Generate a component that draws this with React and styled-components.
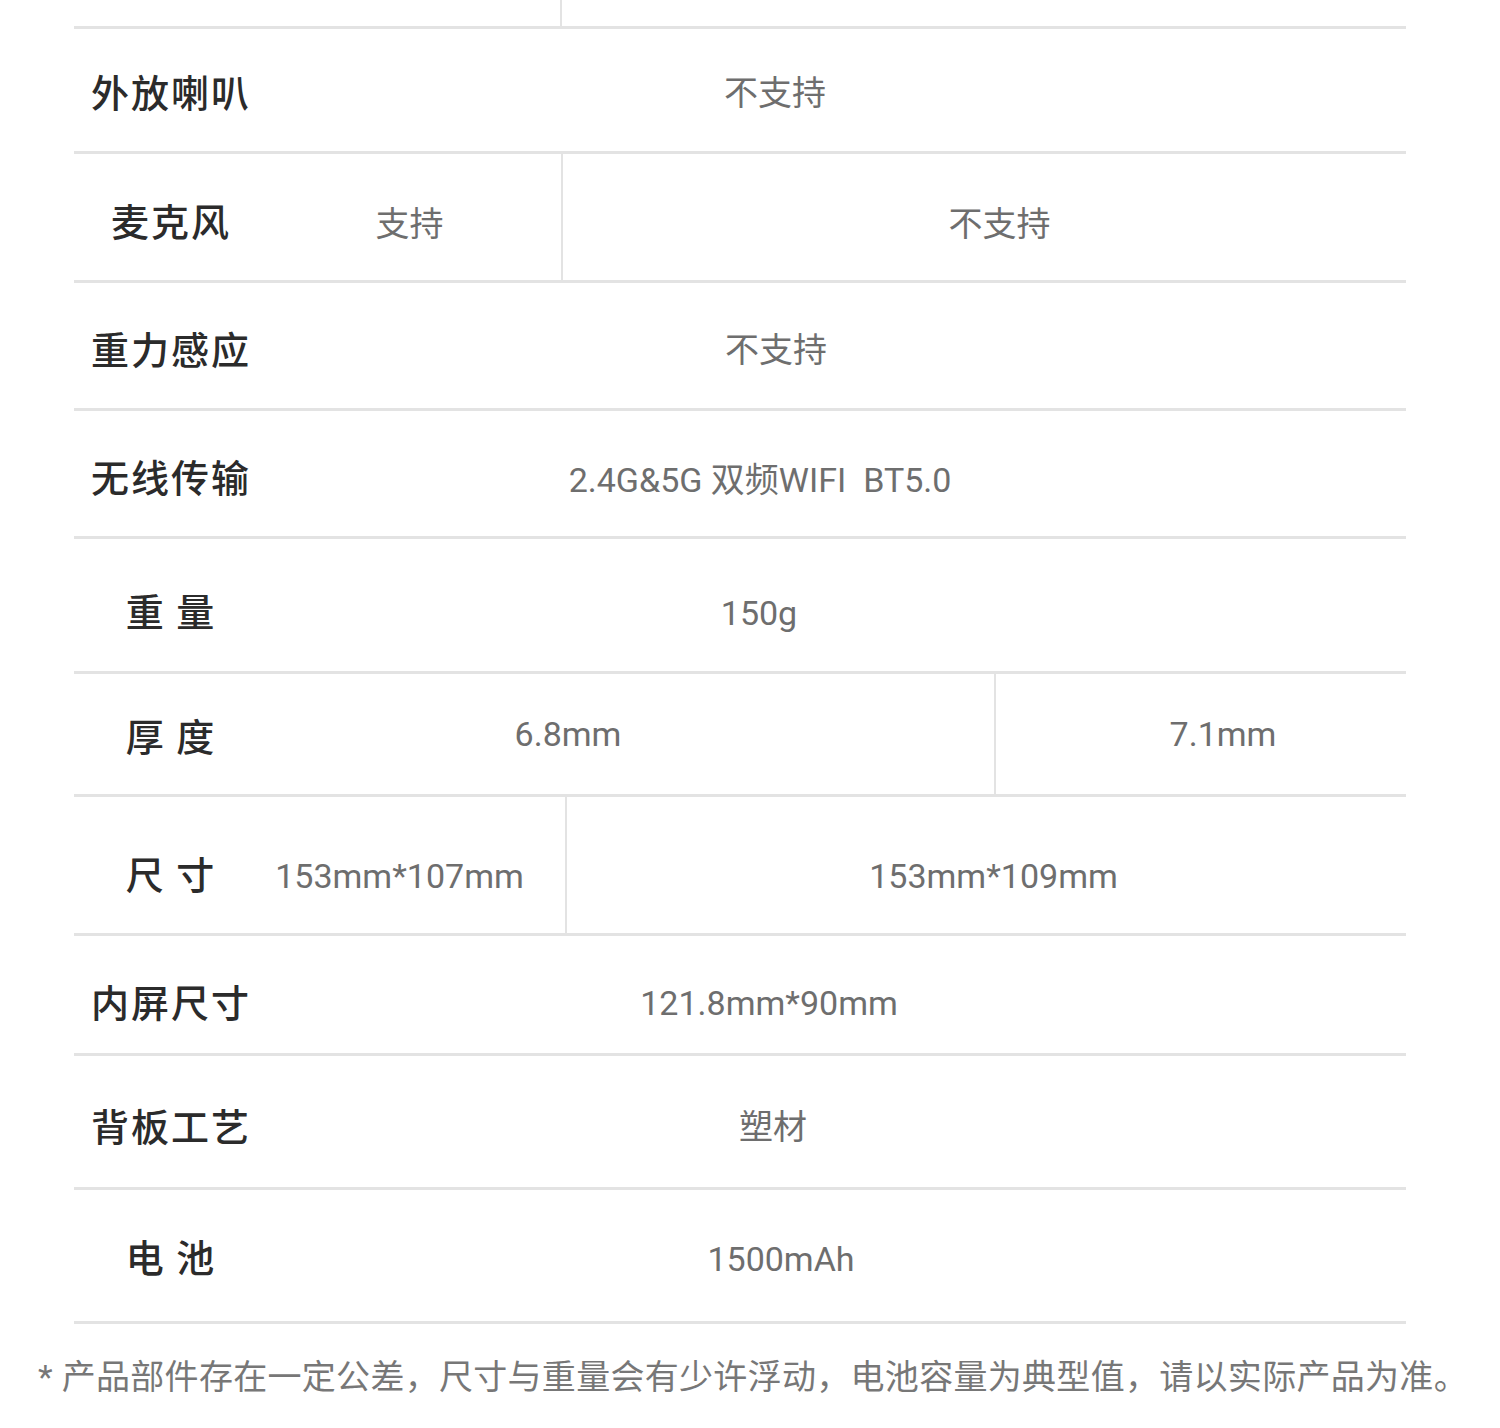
import React from "react";
import styled, { createGlobalStyle } from "styled-components";

const GlobalStyle = createGlobalStyle`
  html, body {
    margin: 0;
    padding: 0;
    background: #ffffff;
  }
`;

// dy: vertical nudge of the text in a row (label / value cells)
const specs = [
  { label: "", h: 26, cells: [{ w: 292, text: "" }, { text: "" }] },
  { label: "外放喇叭", h: 122, cells: [{ text: "不支持", shift: -62 }] },
  {
    label: "麦克风",
    h: 126,
    dy: 2,
    cells: [
      { w: 293, text: "支持", shift: -5, dy: 4 },
      { text: "不支持", shift: 15, dy: 4 },
    ],
  },
  { label: "重力感应", h: 125, dy: 2, cells: [{ text: "不支持", shift: -61, dy: 2 }] },
  { label: "无线传输", h: 125, dy: 2, cells: [{ text: "2.4G&5G 双频WIFI  BT5.0", shift: -77, dy: 4 }] },
  { label: "重 量", h: 132, dy: 4, cells: [{ text: "150g", shift: -78, dy: 8 }] },
  {
    label: "厚 度",
    h: 120,
    cells: [
      { w: 726, text: "6.8mm", shift: -63 },
      { text: "7.1mm", shift: 22 },
    ],
  },
  {
    label: "尺 寸",
    h: 136,
    dy: 7,
    cells: [
      { w: 297, text: "153mm*107mm", shift: -17, dy: 11 },
      { text: "153mm*109mm", shift: 7, dy: 11 },
    ],
  },
  { label: "内屏尺寸", h: 117, dy: 6, cells: [{ text: "121.8mm*90mm", shift: -68, dy: 8 }] },
  { label: "背板工艺", h: 131, dy: 3, cells: [{ text: "塑材", shift: -64, dy: 3 }] },
  { label: "电 池", h: 131, cells: [{ text: "1500mAh", shift: -56, dy: 3 }] },
];

export default function App() {
  return (
    <>
      <GlobalStyle />
      <Page>
        <Table>
          {specs.map((row, i) => (
            <Row key={i} $h={row.h}>
              <Label $dy={row.dy || 0}>{row.label}</Label>
              <Values>
                {row.cells.map((c, j) => (
                  <Cell key={j} $w={c.w} $first={j === 0} $shift={c.shift || 0} $dy={c.dy || 0}>
                    {c.text}
                  </Cell>
                ))}
              </Values>
            </Row>
          ))}
        </Table>
        <Note>* 产品部件存在一定公差，尺寸与重量会有少许浮动，电池容量为典型值，请以实际产品为准。</Note>
      </Page>
    </>
  );
}

const Page = styled.div`
  width: 1500px;
  height: 1428px;
  background: #fff;
  display: flex;
  flex-direction: column;
`;

const Table = styled.div`
  margin-left: 74px;
  width: 1332px;
  display: flex;
  flex-direction: column;
`;

const Row = styled.div`
  display: flex;
  height: ${(p) => p.$h}px;
  border-bottom: 3px solid #e3e3e3;
`;

const Label = styled.div`
  width: 194px;
  flex-shrink: 0;
  box-sizing: border-box;
  display: flex;
  align-items: center;
  justify-content: center;
  padding-top: ${(p) => Math.max(p.$dy * 2, 0)}px;
  padding-bottom: ${(p) => Math.max(-p.$dy * 2, 0)}px;
  font-family: "Noto Sans CJK SC", sans-serif;
  font-size: 38px;
  font-weight: 500;
  letter-spacing: 2px;
  color: #2b2b2b;
  white-space: pre;
`;

const Values = styled.div`
  flex: 1;
  display: flex;
`;

const Cell = styled.div`
  ${(p) => (p.$w ? `width: ${p.$w}px; flex-shrink: 0;` : "flex: 1;")}
  border-left: ${(p) => (p.$first ? "none" : "2px solid #e3e3e3")};
  display: flex;
  align-items: center;
  justify-content: center;
  padding-left: ${(p) => Math.max(p.$shift * 2, 0)}px;
  padding-right: ${(p) => Math.max(-p.$shift * 2, 0)}px;
  padding-top: ${(p) => Math.max(p.$dy * 2, 0)}px;
  padding-bottom: ${(p) => Math.max(-p.$dy * 2, 0)}px;
  box-sizing: border-box;
  font-family: Roboto, "Noto Sans CJK SC", sans-serif;
  font-size: 34px;
  color: #6e6e6e;
  white-space: pre;
`;

const Note = styled.div`
  height: 100px;
  display: flex;
  align-items: center;
  padding-left: 38px;
  font-family: Roboto, "Noto Sans CJK SC", sans-serif;
  font-size: 34px;
  letter-spacing: 0.3px;
  color: #777;
  white-space: nowrap;
`;
